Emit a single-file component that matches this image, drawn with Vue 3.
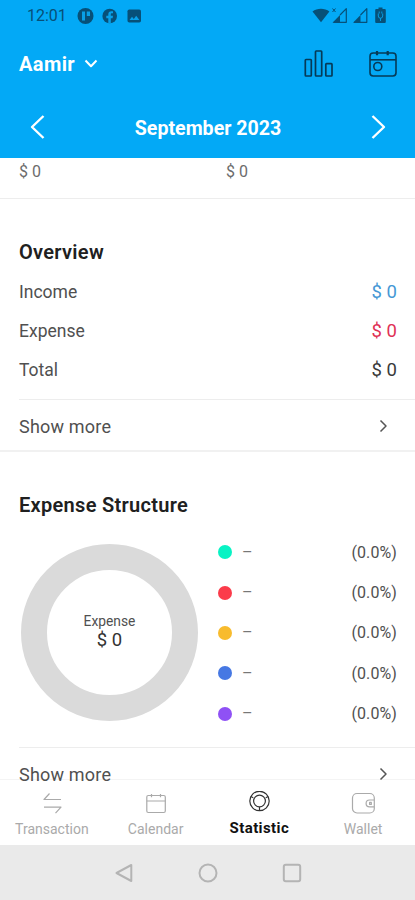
<script setup>
const overview = [
  { label: 'Income', tone: 'income' },
  { label: 'Expense', tone: 'expense' },
  { label: 'Total', tone: 'total' },
]
const legend = ['teal', 'red', 'amber', 'blue', 'violet']
</script>

<template>
  <div class="screen">
    <header class="header">
      <div class="status">
        <span class="clock">12:01</span>
        <svg class="notes" width="66" height="18" viewBox="0 0 66 18">
          <circle cx="8.500" cy="9" r="8" />
          <path class="cut" d="M5 4.500h3v9H5zM9.800 4.500h3.200v4.500H9.800z" />
          <circle cx="32.700" cy="9" r="7.300" />
          <path class="cut" d="M31.300 16.500v-5.300h-2V8.800h2V7.400c0-2.200 1.200-3.200 3-3.200l1.700.1v2h-1.100c-.9 0-1.100.5-1.100 1.200v1.300H36l-.4 2.400h-1.800v5.300z" />
          <rect x="50.500" y="2.500" width="13.500" height="13" rx="1.800" />
          <path class="cut" d="M52.500 13l2.500-3.200 1.800 2.100 2.400-3.200 3.200 4.300z" />
        </svg>
        <svg class="signals" width="76" height="18" viewBox="0 0 76 18">
          <path d="M.5 4.400C5 .8 12.800.8 17.400 4.400L9 15.200z" />
          <path class="thin" d="M20.500 1.500l3 3.500m0-3.500l-3 3.500" />
          <path d="M20.500 15.800L28 8v7.800z" />
          <path class="line" d="M28 8l6.300-6.300v13.600H21.500" />
          <path d="M41 15.800L48.500 8v7.800z" />
          <path class="line" d="M48.500 8l6.300-6.300v13.600H42" />
          <path d="M66.500.5h4V2h2c.8 0 1.300.5 1.300 1.300v11.400c0 .8-.5 1.300-1.300 1.300h-8c-.8 0-1.300-.5-1.300-1.300V3.300c0-.8.5-1.300 1.300-1.300h2z" />
          <path class="cutline" d="M66.300 6.500V9a2.200 2.200 0 0 0 4.400 0V6.500M68.500 11v3M67.200 4.500v2M69.800 4.500v2" />
        </svg>
      </div>

      <div class="account">
        <span class="name">Aamir</span>
        <svg class="caret" width="14" height="10" viewBox="0 0 14 10"><path d="M1.500 1.500l5.500 5.800 5.500-5.800" /></svg>
        <svg class="chart" width="30" height="28" viewBox="0 0 30 28">
          <rect x="1.300" y="9.500" width="6" height="16.500" rx=".7" />
          <rect x="11.500" y="1" width="6.200" height="25" rx=".7" />
          <rect x="21.800" y="13.700" width="6.200" height="12.300" rx=".7" />
        </svg>
        <svg class="date" width="28" height="28" viewBox="0 0 28 28">
          <rect x="1" y="3" width="26" height="23" rx="3.200" />
          <path d="M1 9.800h26" />
          <path class="rings" d="M8 1v4.200M18.700 1v4.200" />
          <circle cx="8.800" cy="16.500" r="4" />
        </svg>
      </div>

      <div class="month">
        <svg width="15" height="26" viewBox="0 0 15 26"><path d="M13.500 2L2 13l11.500 11" /></svg>
        <span class="month-name">September 2023</span>
        <svg width="15" height="26" viewBox="0 0 15 26"><path d="M1.500 2L13 13 1.500 24" /></svg>
      </div>
    </header>

    <main class="content">
      <section class="balances"><span>$ 0</span><span>$ 0</span></section>

      <section class="overview">
        <h2>Overview</h2>
        <div v-for="row in overview" :key="row.label" class="row">
          <span class="row-label">{{ row.label }}</span>
          <span class="amount" :class="row.tone">$ 0</span>
        </div>
        <div class="more">
          <span>Show more</span>
          <svg width="9" height="14" viewBox="0 0 9 14"><path d="M1.500 1.500L7 7l-5.500 5.500" /></svg>
        </div>
      </section>

      <section class="structure">
        <h2>Expense Structure</h2>
        <div class="breakdown">
          <div class="donut">
            <span class="donut-label">Expense</span>
            <span class="donut-value">$ 0</span>
          </div>
          <ul class="legend">
            <li v-for="color in legend" :key="color">
              <i class="dot" :class="color"></i>
              <span class="dash">–</span>
              <span class="percent">(0.0%)</span>
            </li>
          </ul>
        </div>
        <div class="more">
          <span>Show more</span>
          <svg width="9" height="14" viewBox="0 0 9 14"><path d="M1.500 1.500L7 7l-5.500 5.500" /></svg>
        </div>
      </section>
    </main>

    <nav class="tabs">
      <div class="tab">
        <svg width="22" height="24" viewBox="0 0 22 24"><path d="M20 8.500H3L8.500 2.500M3 16.200h17L14.500 22.200" /></svg>
        <span>Transaction</span>
      </div>
      <div class="tab">
        <svg width="22" height="24" viewBox="0 0 22 24">
          <rect x="1.800" y="4.500" width="18.500" height="17" rx="1.500" />
          <path d="M1.800 10H20.300M6.500 3v3.300M15.500 3v3.300" />
        </svg>
        <span>Calendar</span>
      </div>
      <div class="tab active">
        <svg width="22" height="24" viewBox="0 0 22 24">
          <circle cx="11.500" cy="10" r="9.700" />
          <circle cx="11.500" cy="10" r="5.900" />
          <path d="M11.500 15.900v3.800M2.800 5.500l2.500 1.200M20.200 5.500l-2.500 1.200" />
        </svg>
        <span>Statistic</span>
      </div>
      <div class="tab">
        <svg width="24" height="24" viewBox="0 0 24 24">
          <rect x="1.500" y="2.500" width="21.800" height="19.500" rx="4.500" />
          <path d="M23 9h-4.500a3.400 3.400 0 0 0 0 6.800H23M18.600 11.400v2h1.700v-2z" />
        </svg>
        <span>Wallet</span>
      </div>
    </nav>

    <footer class="system">
      <svg width="20" height="20" viewBox="0 0 20 20"><path d="M17.300 2v16L2.500 10z" /></svg>
      <svg width="20" height="20" viewBox="0 0 20 20"><circle cx="10" cy="10" r="8.500" /></svg>
      <svg width="20" height="20" viewBox="0 0 20 20"><rect x="1.800" y="1.800" width="16.400" height="16.400" rx="2" /></svg>
    </footer>
  </div>
</template>

<style>
body { margin: 0; background: #fff; }
</style>

<style scoped>
.screen {
  width: 415px;
  height: 900px;
  display: flex;
  flex-direction: column;
  overflow: hidden;
  background: #fff;
  color: #505050;
  font-family: Roboto, "Liberation Sans", sans-serif;
}
svg { display: block; flex: none; fill: none; stroke-linejoin: round; }
.header { height: 158px; flex: none; background: #03a9f6; color: #fff; }

.status { height: 32px; display: flex; align-items: center; padding: 0 27px; }
.clock { width: 50px; font-size: 16px; line-height: 32px; color: #075078; }
.notes { fill: #075078; }
.signals { margin-left: auto; fill: #075078; }
.cut { fill: #08a0e8; }
.thin { stroke: #075078; stroke-width: 1; }
.line { fill: none; stroke: #075078; stroke-width: 1.200; }
.cutline { fill: none; stroke: #079be0; stroke-width: 1; }

.account { height: 64px; display: flex; align-items: center; padding: 0 18px 0 19px; }
.name { width: 65px; font-size: 20px; font-weight: 700; letter-spacing: 0.4px; }
.caret { stroke: #fff; stroke-width: 2; }
.chart { margin-left: auto; stroke: #063a57; stroke-width: 1.700; }
.date { margin-left: 35px; stroke: #063a57; stroke-width: 1.600; }
.rings { stroke-width: 2.200; }

.month {
  height: 62px;
  display: flex;
  align-items: center;
  justify-content: space-between;
  padding: 0 29px 0 30px;
}
.month svg { stroke: #fff; stroke-width: 2.400; }
.month-name { padding-top: 2px; font-size: 19.600px; font-weight: 700; }

/* The last line of the list stays legible over the tab bar's top edge. */
.content { height: 621px; flex: none; position: relative; z-index: 1; }
.balances {
  height: 41px;
  box-sizing: border-box;
  display: grid;
  grid-template-columns: 207px 1fr;
  padding: 3px 19px 0;
  border-bottom: 1px solid #ededed;
  font-size: 16px;
  line-height: 21px;
  color: #6c6c6c;
}
h2 { margin: 0; font-size: 20px; line-height: 24px; font-weight: 600; color: #202020; letter-spacing: 0.300px; }
.overview { height: 253px; box-sizing: border-box; padding: 41px 0 0 19px; border-bottom: 2px solid #f1f1f1; }
.overview h2 { margin-bottom: 8px; }
.row { height: 39px; display: flex; align-items: center; justify-content: space-between; padding-right: 18px; }
.row-label { font-size: 17.500px; }
.amount { font-size: 18.500px; }
.income { color: #4698d5; }
.expense { color: #df3155; }
.total { color: #3a3a3a; }
.more {
  height: 52px;
  display: flex;
  align-items: center;
  justify-content: space-between;
  padding-right: 27px;
  border-top: 1px solid #ededed;
  font-size: 18px;
  letter-spacing: 0.200px;
}
.overview .more { margin-top: 10px; }
.more svg { stroke: #555; stroke-width: 1.500; }

.structure { padding: 41px 0 0 19px; }
.breakdown { height: 218px; display: flex; padding: 27px 18px 0 2px; box-sizing: border-box; margin-bottom: 12px; }
.donut {
  width: 177px;
  height: 177px;
  box-sizing: border-box;
  border: 26px solid #dadada;
  border-radius: 50%;
  display: flex;
  flex-direction: column;
  align-items: center;
  justify-content: center;
}
.donut-label { margin-top: -3px; font-size: 13.800px; line-height: 18px; }
.donut-value { font-size: 18.500px; line-height: 20px; color: #333; }
.legend { flex: 1; margin: -12px 0 0 20px; padding: 0; list-style: none; }
.legend li { height: 40.400px; display: flex; align-items: center; }
.dot { width: 14px; height: 14px; border-radius: 50%; }
.teal { background: #08f3c4; }
.red { background: #fb3b4a; }
.amber { background: #f8bb2d; }
.blue { background: #4678e3; }
.violet { background: #8f51f5; }
.dash { margin-left: 10px; font-size: 16px; color: #777; }
.percent { margin-left: auto; font-size: 16px; letter-spacing: 0.100px; }

.tabs {
  height: 66px;
  flex: none;
  box-sizing: border-box;
  display: grid;
  grid-template-columns: repeat(4, 1fr);
  border-top: 1px solid #f4f4f4;
}
.tab { display: flex; flex-direction: column; align-items: center; padding-top: 11px; color: #aaa; font-size: 14px; }
.tab svg { stroke: #aaa; stroke-width: 1.200; }
.tab span { margin-top: 5px; line-height: 18px; }
.active { color: #111; font-weight: 700; font-size: 15px; letter-spacing: 0.400px; }
.active span { margin-top: 4px; }
.active svg { stroke: #333; }

.system { flex: 1; display: flex; align-items: center; justify-content: center; gap: 64px; background: #eaeaea; }
.system svg { stroke: #b4b4b4; stroke-width: 2; }
</style>
